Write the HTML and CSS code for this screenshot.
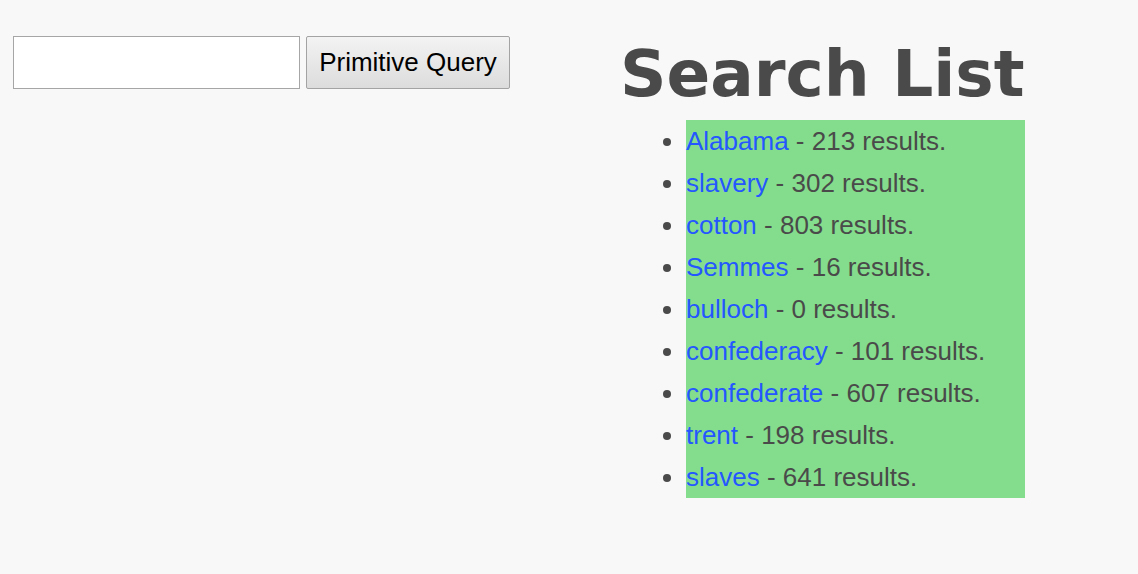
FILE: index.html
```html
<!DOCTYPE html>
<html>
<head>
<meta charset="utf-8">
<link rel="stylesheet" href="styles.css">
</head>
<body>
<div class="page">
  <form class="query">
    <input class="query-input" type="text">
    <button class="query-btn" type="button">Primitive Query</button>
  </form>
  <section class="search">
    <h1 class="search-title">Search List</h1>
    <ul class="search-list">
      <li><a href="#">Alabama</a> - 213 results.</li>
      <li><a href="#">slavery</a> - 302 results.</li>
      <li><a href="#">cotton</a> - 803 results.</li>
      <li><a href="#">Semmes</a> - 16 results.</li>
      <li><a href="#">bulloch</a> - 0 results.</li>
      <li><a href="#">confederacy</a> - 101 results.</li>
      <li><a href="#">confederate</a> - 607 results.</li>
      <li><a href="#">trent</a> - 198 results.</li>
      <li><a href="#">slaves</a> - 641 results.</li>
    </ul>
  </section>
</div>
</body>
</html>
```
FILE: styles.css
```css
html, body {
  margin: 0;
  padding: 0;
  background: #f8f8f8;
}
.page {
  display: flex;
  align-items: flex-start;
  padding: 36px 0 0 13px;
  height: 574px;
  box-sizing: border-box;
}
.query {
  display: flex;
  gap: 6px;
  margin: 0;
}
.query-input {
  width: 287px;
  height: 53px;
  box-sizing: border-box;
  border: 1px solid #a6a6a6;
  background: #fff;
  margin: 0;
  padding: 0 4px;
  font: 24px "Liberation Sans", Arial, sans-serif;
}
.query-btn {
  width: 204px;
  height: 53px;
  box-sizing: border-box;
  margin: 0;
  padding: 0;
  border: 1px solid #a3a3a3;
  border-radius: 2px;
  background: linear-gradient(#f3f3f3, #dcdcdc);
  color: #000;
  font: 26px "Liberation Sans", Arial, sans-serif;
}
.search {
  margin-left: 110px;
  width: 405px;
}
.search-title {
  margin: 0;
  font: bold 64.5px/75px "DejaVu Sans", Verdana, sans-serif;
  color: #4a4a4a;
  white-space: nowrap;
}
.search-list {
  margin: 9px 0 0 66px;
  padding: 0;
  background: #84dd8c;
  font: 26px/42px "Liberation Sans", Arial, sans-serif;
  color: #4a4a4a;
}
.search-list a {
  color: #2457ff;
  text-decoration: none;
}
```
